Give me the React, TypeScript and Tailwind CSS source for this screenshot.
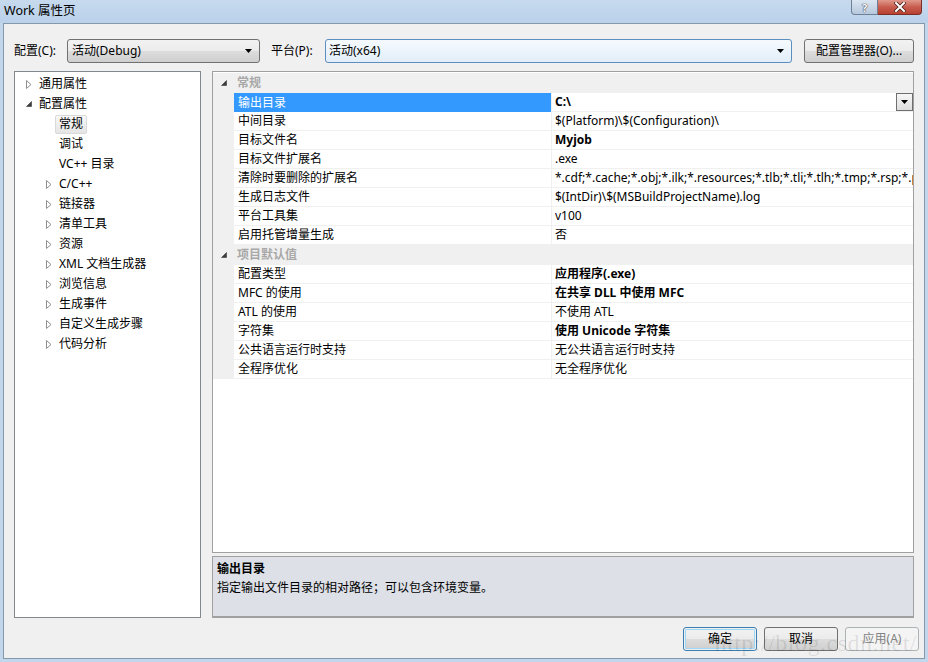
import React from 'react'

const FONT = { fontFamily: '"Noto Sans", "Noto Sans CJK SC", sans-serif' }

type Prop = { name: string; value: string; bold?: boolean; selected?: boolean }

const groups: { title: string; items: Prop[] }[] = [
  {
    title: '常规',
    items: [
      { name: '输出目录', value: 'C:\\', bold: true, selected: true },
      { name: '中间目录', value: '$(Platform)\\$(Configuration)\\' },
      { name: '目标文件名', value: 'Myjob', bold: true },
      { name: '目标文件扩展名', value: '.exe' },
      {
        name: '清除时要删除的扩展名',
        value: '*.cdf;*.cache;*.obj;*.ilk;*.resources;*.tlb;*.tli;*.tlh;*.tmp;*.rsp;*.pgc;*.pgd;*.meta;$(TargetPath)'
      },
      { name: '生成日志文件', value: '$(IntDir)\\$(MSBuildProjectName).log' },
      { name: '平台工具集', value: 'v100' },
      { name: '启用托管增量生成', value: '否' }
    ]
  },
  {
    title: '项目默认值',
    items: [
      { name: '配置类型', value: '应用程序(.exe)', bold: true },
      { name: 'MFC 的使用', value: '在共享 DLL 中使用 MFC', bold: true },
      { name: 'ATL 的使用', value: '不使用 ATL' },
      { name: '字符集', value: '使用 Unicode 字符集', bold: true },
      { name: '公共语言运行时支持', value: '无公共语言运行时支持' },
      { name: '全程序优化', value: '无全程序优化' }
    ]
  }
]

type Node = { label: string; level: number; state: 'closed' | 'open' | 'leaf'; selected?: boolean }

const tree: Node[] = [
  { label: '通用属性', level: 0, state: 'closed' },
  { label: '配置属性', level: 0, state: 'open' },
  { label: '常规', level: 1, state: 'leaf', selected: true },
  { label: '调试', level: 1, state: 'leaf' },
  { label: 'VC++ 目录', level: 1, state: 'leaf' },
  { label: 'C/C++', level: 1, state: 'closed' },
  { label: '链接器', level: 1, state: 'closed' },
  { label: '清单工具', level: 1, state: 'closed' },
  { label: '资源', level: 1, state: 'closed' },
  { label: 'XML 文档生成器', level: 1, state: 'closed' },
  { label: '浏览信息', level: 1, state: 'closed' },
  { label: '生成事件', level: 1, state: 'closed' },
  { label: '自定义生成步骤', level: 1, state: 'closed' },
  { label: '代码分析', level: 1, state: 'closed' }
]

function ClosedArrow() {
  return (
    <svg width="6" height="9" viewBox="0 0 6 9">
      <polygon points="0.5,0.5 5,4.5 0.5,8.5" fill="#fff" stroke="#8f8f8f" strokeWidth="1" />
    </svg>
  )
}

function OpenArrow() {
  return (
    <svg width="6" height="6" viewBox="0 0 6 6">
      <polygon points="5.5,0.5 5.5,5.5 0.5,5.5" fill="#3b3b3b" stroke="#3b3b3b" strokeWidth="0.6" />
    </svg>
  )
}

function DownArrow() {
  return (
    <svg width="7" height="4" viewBox="0 0 7 4">
      <polygon points="0,0 7,0 3.5,4" fill="#000" />
    </svg>
  )
}

const btnGrad = 'bg-[linear-gradient(#f2f2f2,#ebebeb_50%,#dddddd_50%,#cfcfcf)]'

export default function App() {
  return (
    <div className="relative w-[928px] h-[662px] overflow-hidden bg-[#c2d6ec] flex flex-col text-[12px] text-black" style={FONT}>
      {/* title bar */}
      <div className="h-[23px] shrink-0 flex items-start bg-linear-to-b from-[#c7daee] to-[#bad1ea]">
        <div className="pl-[4px] pt-[1px] leading-[20px] text-[12.5px] text-black">Work 属性页</div>
        <div className="ml-auto mr-[6px] flex">
          <div className="w-[27px] h-[15px] rounded-bl-[4px] border border-t-0 border-[#6f7f95] bg-linear-to-b from-[#dce6f2] to-[#b7c8dc] flex items-center justify-center">
            <span className="text-white font-bold text-[11px] leading-none [text-shadow:0_0_1px_#223,0_0_1px_#223]">?</span>
          </div>
          <div className="w-[44px] h-[15px] rounded-br-[4px] border border-t-0 border-l-0 border-[#7a2e26] bg-linear-to-b from-[#e0988c] via-[#c75d4f] to-[#b8402f] flex items-center justify-center">
            <svg width="12" height="10" viewBox="0 0 12 10">
              <path d="M2 1 L10 9 M10 1 L2 9" stroke="#4a1f1a" strokeWidth="3.6" strokeLinecap="square" />
              <path d="M2 1 L10 9 M10 1 L2 9" stroke="#fff" strokeWidth="2" strokeLinecap="square" />
            </svg>
          </div>
        </div>
      </div>

      {/* client area */}
      <div className="flex-1 min-h-0 mx-[3px] mb-[3px] border border-[#8597ab] bg-[#f0f0f0] flex flex-col px-[10px] pt-[15px] pb-[7px]">
        {/* configuration row */}
        <div className="h-[24px] shrink-0 flex items-center">
          <span className="w-[53px] whitespace-nowrap">配置(C):</span>
          <div className={`w-[193px] h-[24px] rounded-[3px] border border-[#707070] ${btnGrad} flex items-center pl-[4px] pr-[7px]`}>
            <span className="flex-1">活动(Debug)</span>
            <DownArrow />
          </div>
          <span className="ml-[11px] w-[54px] whitespace-nowrap">平台(P):</span>
          <div className="w-[467px] h-[24px] rounded-[3px] border border-[#5b8fc0] bg-linear-to-b from-[#f5fafe] to-[#e2eef9] flex items-center pl-[3px] pr-[7px]">
            <span className="flex-1">活动(x64)</span>
            <DownArrow />
          </div>
          <div className={`ml-auto w-[110px] h-[24px] rounded-[3px] border border-[#707070] ${btnGrad} flex items-center justify-center whitespace-nowrap`}>
            配置管理器(O)...
          </div>
        </div>

        {/* main area */}
        <div className="flex-1 mt-[8px] flex gap-[11px] min-h-0">
          {/* tree */}
          <div className="w-[187px] shrink-0 bg-white border border-[#828790] pt-[2px]">
            {tree.map(n => (
              <div
                key={n.label}
                className="h-[20px] flex items-center whitespace-nowrap"
                style={{ paddingLeft: 11 + n.level * 20 }}
              >
                <div className="w-[9px] shrink-0 flex items-center">
                  {n.state === 'closed' && <ClosedArrow />}
                  {n.state === 'open' && <OpenArrow />}
                </div>
                <span
                  className={`h-[19px] flex items-center px-[3px] border rounded-[2px] ${
                    n.selected
                      ? 'border-[#d9d9d9] bg-linear-to-b from-[#f8f8f8] to-[#e5e5e5]'
                      : 'border-transparent'
                  }`}
                >
                  {n.label}
                </span>
              </div>
            ))}
          </div>

          {/* right column */}
          <div className="flex-1 min-w-0 flex flex-col">
            {/* property grid */}
            <div className="flex-1 min-h-0 bg-white border border-[#a0a0a0] pt-[1px] overflow-hidden">
              {groups.map(g => (
                <div key={g.title}>
                  <div className="h-[20px] bg-[#f0f0f0] flex items-center">
                    <div className="w-[21px] pl-[8px] flex items-center">
                      <OpenArrow />
                    </div>
                    <span className="pl-[3px] font-bold text-[#a8a8a8]">{g.title}</span>
                  </div>
                  {g.items.map(p => (
                    <div key={p.name} className="h-[19px] flex">
                      <div className="w-[21px] shrink-0 bg-[#f0f0f0]" />
                      <div
                        className={`w-[318px] shrink-0 border-r border-[#f0f0f0] flex items-center pl-[4px] whitespace-nowrap ${
                          p.selected ? 'bg-[#3399ff] text-white' : 'border-b'
                        }`}
                      >
                        {p.name}
                      </div>
                      <div className="flex-1 min-w-0 border-b border-[#f0f0f0] flex items-center pl-[3px]">
                        <span className={`flex-1 min-w-0 whitespace-nowrap overflow-hidden ${p.bold ? 'font-bold' : ''}`}>
                          {p.value}
                        </span>
                        {p.selected && (
                          <div className="w-[17px] h-[18px] shrink-0 border border-[#6f6f6f] bg-linear-to-b from-[#f6f6f6] to-[#dedede] flex items-center justify-center">
                            <DownArrow />
                          </div>
                        )}
                      </div>
                    </div>
                  ))}
                </div>
              ))}
            </div>

            {/* description */}
            <div className="h-[62px] shrink-0 mt-[3px] bg-[#dde0e7] border border-[#a0a0a0] border-b-2 px-[4px] pt-[3px]">
              <div className="font-bold leading-[18px]">输出目录</div>
              <div className="leading-[18px] mt-[1px]">指定输出文件目录的相对路径；可以包含环境变量。</div>
            </div>
          </div>
        </div>

        {/* buttons */}
        <div className="relative shrink-0 mt-[9px] mr-[-5px] h-[24px] flex justify-end gap-[7px]">
          <div className="w-[74px] h-[24px] rounded-[3px] border border-[#3c7fb1] p-[1px]">
            <div className={`h-full rounded-[2px] ${btnGrad} flex items-center justify-center shadow-[inset_0_0_0_1px_#9fd5f5]`}>
              确定
            </div>
          </div>
          <div className={`w-[74px] h-[24px] rounded-[3px] border border-[#707070] ${btnGrad} flex items-center justify-center`}>
            取消
          </div>
          <div className="w-[74px] h-[24px] rounded-[3px] border border-[#adb2b5] bg-[#f4f4f4] text-[#838383] flex items-center justify-center">
            应用(A)
          </div>
          <div
            className="pointer-events-none absolute right-[2px] top-[-2px] text-[24px] tracking-[0.5px] text-black/10 whitespace-nowrap"
            style={{ fontFamily: '"Liberation Serif", serif' }}
          >
            http://blog.csdn.net/
          </div>
        </div>
      </div>
    </div>
  )
}
